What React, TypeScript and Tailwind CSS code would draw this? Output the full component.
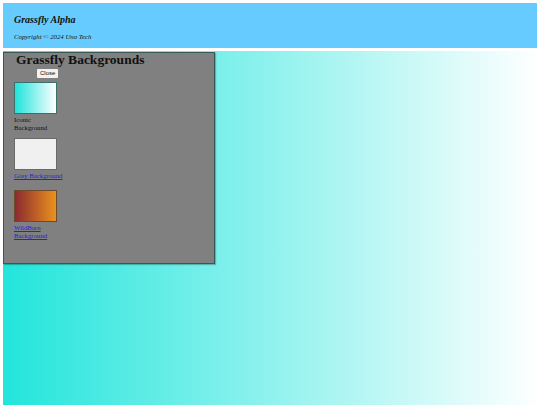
import type { ReactNode } from 'react'

type Swatch = {
  label: string
  link: boolean
  swatch: string
  gap: string
}

const swatches: Swatch[] = [
  {
    label: 'Iconic Background',
    link: false,
    swatch: 'bg-[linear-gradient(to_right,#20e4dc,#ffffff)] border-[#3b6e6c]',
    gap: 'mb-[6px]',
  },
  {
    label: 'Grey Background',
    link: true,
    swatch: 'bg-[#f0f0f0] border-[#6a6a6a]',
    gap: 'mb-[10px]',
  },
  {
    label: 'WildBarn Background',
    link: true,
    swatch: 'bg-[linear-gradient(to_right,#8c2a2f,#ea921e)] border-[#6e4a2c]',
    gap: 'mb-0',
  },
]

function Item({ s }: { s: Swatch }): ReactNode {
  return (
    <div className={`flex w-[49px] flex-col ${s.gap}`}>
      <div className={`h-[32px] w-[43px] border ${s.swatch}`} />
      {s.link ? (
        <a href="#" className="mt-[2px] text-[6.8px] leading-[8px] text-[#2323d8] underline">
          {s.label}
        </a>
      ) : (
        <span className="mt-[2px] text-[6.8px] leading-[8px] text-[#111]">{s.label}</span>
      )}
    </div>
  )
}

export default function App() {
  return (
    <div
      className="relative flex h-[405px] w-[540px] flex-col overflow-hidden bg-white pl-[3px] pt-[3px]"
      style={{ fontFamily: '"Liberation Serif", "Times New Roman", serif' }}
    >
      <header className="flex h-[45px] w-[534px] flex-col bg-[#66ccff] pl-[11px] pt-[11px] italic text-[#111]">
        <h1 className="text-[10px] font-bold leading-[12px]">Grassfly Alpha</h1>
        <p className="mt-[7px] text-[6.8px] leading-[8px]">Copyright © 2024 Uno Tech</p>
      </header>

      <main className="mt-[3px] flex-1 bg-[linear-gradient(to_right,#22e5dc,#ffffff)]" />

      <aside className="absolute left-[3px] top-[52px] flex h-[212px] w-[212px] flex-col border border-[#365a58] bg-[#808080] pl-[10px] shadow-[1px_1px_1px_rgba(0,0,0,0.25)]">
        <h2 className="ml-[2px] mt-[-1px] text-[13.5px] font-bold leading-[16px] text-[#111]">
          Grassfly Backgrounds
        </h2>
        <div className="ml-[23px] mt-[1px] flex">
          <button
            className="h-[9px] rounded-[1px] bg-[#f2f2f2] px-[3px] text-[6px] leading-[9px] text-[#111]"
            style={{ fontFamily: '"Liberation Sans", Arial, sans-serif' }}
          >
            Close
          </button>
        </div>
        <div className="mt-[4px] flex flex-col">
          {swatches.map((s) => (
            <Item key={s.label} s={s} />
          ))}
        </div>
      </aside>
    </div>
  )
}
